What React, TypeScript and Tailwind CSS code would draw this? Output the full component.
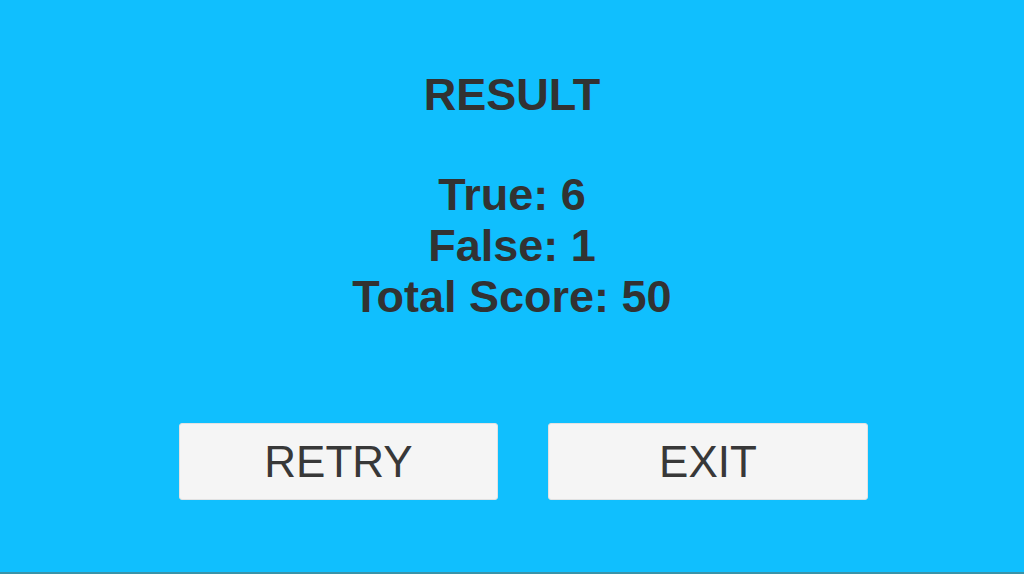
export default function App() {
  const stats = [
    { label: "True", value: 6 },
    { label: "False", value: 1 },
    { label: "Total Score", value: 50 },
  ];

  return (
    <div
      className="w-[1024px] h-[574px] bg-[#10bffe] flex flex-col overflow-hidden text-[#323232]"
      style={{ fontFamily: '"Liberation Sans", Arial, sans-serif' }}
    >
      {/* Title */}
      <h1 className="mt-[69px] text-center text-[45px] leading-[51px] font-bold">RESULT</h1>

      {/* Stats */}
      <div className="mt-[49px] flex flex-col items-center text-[45px] leading-[51px] font-bold">
        {stats.map((s) => (
          <div key={s.label}>
            {s.label}: {s.value}
          </div>
        ))}
      </div>

      {/* Buttons */}
      <div className="mt-[101px] flex gap-[50px] pl-[179px]">
        <button className="w-[319px] h-[77px] bg-[#f5f5f5] rounded-[3px] border border-[#e2e2e2] text-[44px] text-[#383838] leading-none">
          RETRY
        </button>
        <button className="w-[320px] h-[77px] bg-[#f5f5f5] rounded-[3px] border border-[#e2e2e2] text-[44px] text-[#383838] leading-none">
          EXIT
        </button>
      </div>

      <div className="flex-1" />
      <div className="h-[2px] bg-[#3a93a8]" />
    </div>
  );
}
